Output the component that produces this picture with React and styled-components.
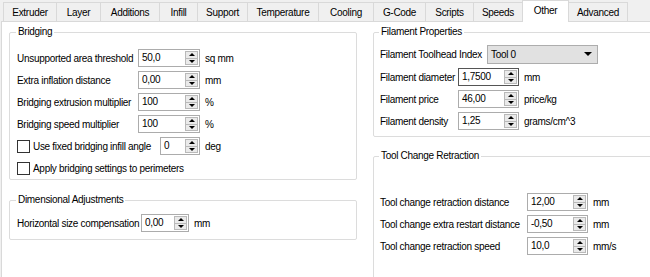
import styled, { createGlobalStyle } from "styled-components";

const GlobalStyle = createGlobalStyle`
  html, body {
    margin: 0;
    padding: 0;
    background: #f0f0f0;
    overflow: hidden;
  }
  body {
    font-family: "Liberation Sans", Arial, sans-serif;
    font-size: 10px;
    letter-spacing: -0.3px;
    color: #000;
  }
`;

const tabs = [
  { name: "Extruder", w: 54 },
  { name: "Layer", w: 45 },
  { name: "Additions", w: 60 },
  { name: "Infill", w: 39 },
  { name: "Support", w: 51 },
  { name: "Temperature", w: 72 },
  { name: "Cooling", w: 56 },
  { name: "G-Code", w: 53 },
  { name: "Scripts", w: 49 },
  { name: "Speeds", w: 50 },
  { name: "Other", w: 47, active: true },
  { name: "Advanced", w: 60 },
];

function App() {
  return (
    <>
      <GlobalStyle />
      <Page>
        <TabBar>
          {tabs.map((t) => (
            <Tab key={t.name} $w={t.w} $active={t.active}>
              {t.name}
            </Tab>
          ))}
        </TabBar>
        <Pane>
          <Column $gap={14}>
            <Group $top={11} $bottom={2}>
              <Legend>Bridging</Legend>
              <FormGrid $cols="116px 62px auto">
                <Label>Unsupported area threshold</Label>
                <SpinBox value="50,0" w={62} />
                <Unit>sq mm</Unit>

                <Label>Extra inflation distance</Label>
                <SpinBox value="0,00" w={62} />
                <Unit>mm</Unit>

                <Label>Bridging extrusion multiplier</Label>
                <SpinBox value="100" w={62} />
                <Unit>%</Unit>

                <Label>Bridging speed multiplier</Label>
                <SpinBox value="100" w={62} />
                <Unit>%</Unit>

                <CheckRow $span={2}>
                  <Check />
                  <span>Use fixed bridging infill angle</span>
                  <Push />
                  <SpinBox value="0" w={40} />
                </CheckRow>
                <Unit>deg</Unit>

                <CheckRow $span={3}>
                  <Check />
                  <span>Apply bridging settings to perimeters</span>
                </CheckRow>
              </FormGrid>
            </Group>

            <Group $top={8} $bottom={7}>
              <Legend>Dimensional Adjustments</Legend>
              <FormGrid $cols="119px 48px auto">
                <Label>Horizontal size compensation</Label>
                <SpinBox value="0,00" w={48} />
                <Unit>mm</Unit>
              </FormGrid>
            </Group>
          </Column>

          <Column $gap={13}>
            <Group $top={7} $bottom={6} $left={6}>
              <Legend>Filament Properties</Legend>
              <FormGrid $cols="102px 111px">
                <Label>Filament Toolhead Index</Label>
                <Combo>
                  <span>Tool 0</span>
                  <Arrow $down />
                </Combo>
              </FormGrid>
              <FormGrid $cols="73px 61px auto" $mt={5}>
                <Label>Filament diameter</Label>
                <SpinBox value="1,7500" w={61} focus />
                <Unit>mm</Unit>

                <Label>Filament price</Label>
                <SpinBox value="46,00" w={61} />
                <Unit>price/kg</Unit>

                <Label>Filament density</Label>
                <SpinBox value="1,25" w={61} />
                <Unit>grams/cm^3</Unit>
              </FormGrid>
            </Group>

            <Group $top={31} $bottom={6} $left={6} $grow>
              <Legend>Tool Change Retraction</Legend>
              <FormGrid $cols="142px 61px auto">
                <Label>Tool change retraction distance</Label>
                <SpinBox value="12,00" w={61} />
                <Unit>mm</Unit>

                <Label>Tool change extra restart distance</Label>
                <SpinBox value="-0,50" w={61} />
                <Unit>mm</Unit>

                <Label>Tool change retraction speed</Label>
                <SpinBox value="10,0" w={61} />
                <Unit>mm/s</Unit>
              </FormGrid>
            </Group>
          </Column>
        </Pane>
      </Page>
    </>
  );
}

function SpinBox({ value, w, focus }) {
  return (
    <Spin $w={w} $focus={focus}>
      <SpinValue>{value}</SpinValue>
      <SpinButtons>
        <SpinBtn>
          <Arrow />
        </SpinBtn>
        <SpinBtn>
          <Arrow $down />
        </SpinBtn>
      </SpinButtons>
    </Spin>
  );
}

const Page = styled.div`
  width: 720px;
  height: 300px;
  padding-left: 1px;
  display: flex;
  flex-direction: column;
`;

const TabBar = styled.div`
  display: flex;
  align-items: flex-end;
  height: 21px;
  padding-left: 2px;
  position: relative;
  z-index: 1;
`;

const Tab = styled.div`
  box-sizing: border-box;
  width: ${({ $w }) => $w}px;
  height: ${({ $active }) => ($active ? 22 : 19)}px;
  margin-left: -1px;
  margin-bottom: ${({ $active }) => ($active ? -1 : 0)}px;
  &:first-child {
    margin-left: 0;
  }
  border: 1px solid #d9d9d9;
  border-bottom: none;
  background: ${({ $active }) => ($active ? "#fff" : "#f0f0f0")};
  position: relative;
  z-index: ${({ $active }) => ($active ? 2 : 1)};
  display: flex;
  align-items: center;
  justify-content: center;
  padding-bottom: ${({ $active }) => ($active ? 2 : 0)}px;
  white-space: nowrap;
`;

const Pane = styled.div`
  flex: 1;
  background: #fff;
  border: 1px solid #d9d9d9;
  display: grid;
  grid-template-columns: 348px 1fr;
  column-gap: 16px;
  padding: 4px 0 0 7px;
`;

const Column = styled.div`
  display: flex;
  flex-direction: column;
  gap: ${({ $gap }) => $gap}px;
  min-width: 0;
`;

const Group = styled.fieldset`
  margin: 0;
  min-width: 0;
  border: 1px solid #dcdcdc;
  border-radius: 2px;
  padding: ${({ $top }) => $top}px 0 ${({ $bottom }) => $bottom}px
    ${({ $left = 7 }) => $left}px;
  flex: ${({ $grow }) => ($grow ? 1 : "none")};
`;

const Legend = styled.legend`
  padding: 0 2px;
  margin-left: -1px;
  line-height: 12px;
`;

const FormGrid = styled.div`
  display: grid;
  grid-template-columns: ${({ $cols }) => $cols};
  grid-auto-rows: 18px;
  column-gap: 5px;
  row-gap: 4px;
  align-items: center;
  margin-top: ${({ $mt = 0 }) => $mt}px;
`;

const Label = styled.span`
  white-space: nowrap;
`;

const Unit = styled.span`
  white-space: nowrap;
`;

const CheckRow = styled.div`
  grid-column: span ${({ $span }) => $span};
  display: flex;
  align-items: center;
  gap: 3px;
  white-space: nowrap;
`;

const Push = styled.div`
  flex: 1;
`;

const Check = styled.span`
  box-sizing: border-box;
  width: 13px;
  height: 13px;
  border: 1px solid #333;
  background: #fff;
`;

const Spin = styled.div`
  box-sizing: border-box;
  width: ${({ $w }) => $w}px;
  height: 18px;
  display: flex;
  background: #fff;
  border: 1px solid ${({ $focus }) => ($focus ? "#555" : "#acacac")};
`;

const SpinValue = styled.span`
  flex: 1;
  padding-left: 3px;
  line-height: 16px;
  overflow: hidden;
`;

const SpinButtons = styled.div`
  display: flex;
  flex-direction: column;
  width: 13px;
  margin: 1px 1px 1px 0;
  border: 1px solid #b9b9b9;
  box-sizing: border-box;
`;

const SpinBtn = styled.div`
  flex: 1;
  background: #eaeaea;
  display: flex;
  align-items: center;
  justify-content: center;
  & + & {
    border-top: 1px solid #b9b9b9;
  }
`;

const Arrow = styled.span`
  width: 0;
  height: 0;
  border-left: 3px solid transparent;
  border-right: 3px solid transparent;
  ${({ $down }) =>
    $down ? "border-top: 3px solid #000;" : "border-bottom: 3px solid #000;"}
`;

const Combo = styled.div`
  box-sizing: border-box;
  height: 19px;
  background: #e1e1e1;
  border: 1px solid #adadad;
  display: flex;
  align-items: center;
  justify-content: space-between;
  padding: 0 5px 0 3px;

  ${Arrow} {
    border-left-width: 4px;
    border-right-width: 4px;
    border-top-width: 4px;
  }
`;

export default App;
